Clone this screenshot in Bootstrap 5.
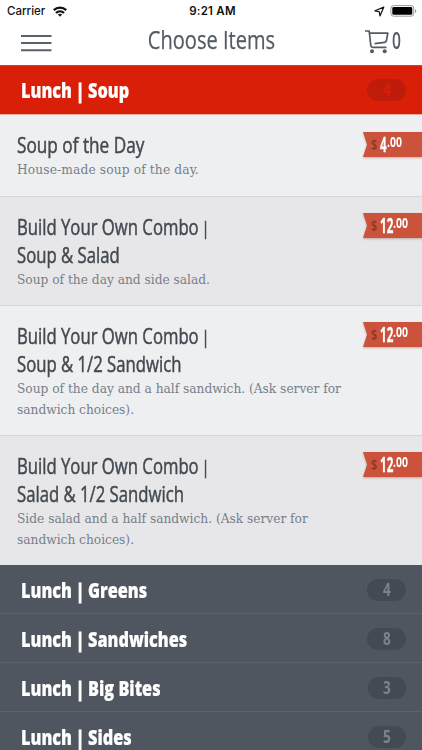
<!DOCTYPE html>
<html lang="en">
<head>
<meta charset="utf-8">
<meta name="viewport" content="width=device-width, initial-scale=1">
<title>Choose Items</title>
<link href="https://cdn.jsdelivr.net/npm/bootstrap@5.3.0/dist/css/bootstrap.min.css" rel="stylesheet">
<style>
html,body{height:750px;overflow:hidden}
body{font-family:"Open Sans","Noto Sans",sans-serif;background:#4f565f;color:#434950}
.fit{display:inline-block;white-space:nowrap;transform-origin:0 50%}
.status{height:22px;font:500 11.5px/22px Inter,sans-serif;color:#111;padding:0 4px 0 7px}
.status .clock{letter-spacing:.25px}
.topbar{height:43px}
.page-title{font-size:26px;line-height:34px;color:#535b66;font-weight:400;transform:scaleX(.772);transform-origin:50% 50%;white-space:nowrap;-webkit-text-stroke:.25px #535b66}
.count-cart{width:14px;font-size:23px;line-height:36px;font-weight:600;color:#535b66;transform:scaleX(.68);margin-left:1px}
.section-row{height:49px;padding:1px 16px 0 21px;background:#4f565f;border-bottom:1px solid #5b626b}
.section-row.open{height:50px;padding-top:0;background:#d91f07;border-top:1px solid #c4462f;border-bottom:1px solid #e9aaa2}
.section-name{font-weight:800;font-size:21px;line-height:28px;color:#fff;transform:scaleX(.775);-webkit-text-stroke:.2px #fff}
.section-name i{font-style:normal;font-size:.92em;line-height:0;-webkit-text-stroke:1px #fff}
.tally{width:39px;height:22px;background:#444a52;color:#7a838e;font-weight:700;font-size:17px}
.tally.slim{width:38px}
.tally span{transform:scaleX(.8)}
.section-row:not(.open) .tally{margin-top:1px}
.open .tally{background:#bf1c0b;color:#d91f07}
.dish{padding:16px 0 0 17px;background:#eeeff1;border-bottom:1px solid #d5d6d9}
.dish.alt{background:#e7e7e9}
.h0line{height:82px}.h2line{height:109px}.h3line{height:130px}
.h0line .ribbon{margin-top:1px}
.dish.last-dish{border-bottom:0;height:129px}
.dish-name{font-size:21.5px;line-height:28px;font-weight:400;transform:scaleX(.777);-webkit-text-stroke:.5px #434950;vertical-align:top}
.dish-name i{font-style:normal;font-size:.88em;line-height:0;margin-left:-2px}
.dish-name.short-name{transform:scaleX(.8)}
.dish-note{font:13.6px/21px "DejaVu Serif Condensed","DejaVu Serif",serif;font-stretch:condensed;color:#777e88;letter-spacing:-.015px}
.dish-note.airy{letter-spacing:.13px}
.ribbon{width:59px;height:25px;background:#cb523b;clip-path:polygon(0 0,100% 0,100% 100%,0 100%,4px 50%);color:#fff;padding-left:8px;line-height:25px}
.ribbon-wrap{filter:drop-shadow(0 1px 1px rgba(120,50,35,.35))}
.cur{font-size:14px;color:#8c3424;font-weight:600;width:9px;transform:scaleX(.8)}
.amt{font-size:21.5px;line-height:24px;font-weight:700;transform:scaleX(.54);width:13px;-webkit-text-stroke:.3px #fff}
.amt.one{width:7px}
.cents{font-size:14.5px;line-height:20px;font-weight:700;transform:scaleX(.72)}
</style>
<script src="https://cdn.jsdelivr.net/npm/bootstrap@5.3.0/dist/js/bootstrap.bundle.min.js"></script>
</head>
<body>
<header class="bg-white">
  <div class="status row g-0">
    <div class="col d-flex align-items-center"><span>Carrier</span>
      <svg class="ms-2" width="14" height="11" viewBox="0 0 14 11"><g fill="none" stroke="#111" stroke-width="2.300"><path d="M.8 4.100a8.900 8.900 0 0 1 12.400 0"/><path d="M3 7a5.800 5.800 0 0 1 8 0"/></g><path d="M7 10.800 4.900 8.600a3.200 3.200 0 0 1 4.200 0Z" fill="#111"/></svg>
    </div>
    <div class="col-auto fw-semibold clock">9:21 AM</div>
    <div class="col d-flex align-items-center justify-content-end">
      <svg width="11" height="11" viewBox="0 0 11 11"><path d="M9.800 1 1 4.900l4.200.7.800 4.300Z" fill="none" stroke="#111" stroke-width="1.200" stroke-linejoin="round"/></svg>
      <svg class="ms-1" width="29" height="12" viewBox="-1 0 29 12"><rect x=".9" y=".6" width="22.800" height="10.600" rx="2.600" fill="none" stroke="#999"/><rect x="2.300" y="2" width="20" height="7.800" rx="1.400" fill="#000"/><path d="M25 4v4q1.300-.6 1.300-2T25 4Z" fill="#999"/></svg>
    </div>
  </div>
  <div class="topbar row g-0">
    <div class="col ps-3"><svg class="ms-1 mt-2" width="32" height="26" viewBox="0 0 32 26"><path d="M1 5.900h30.500M1 13h30.500M1 20.300h30.500" stroke="#59616c" stroke-width="2"/></svg></div>
    <h1 class="page-title col-auto mb-0">Choose Items</h1>
    <div class="col d-flex justify-content-end pe-3">
      <svg class="mt-1" width="27" height="28" viewBox="0 0 27 28"><path d="M1 5h4.200l1.600 14.500q.2 1.800 2 1.800h13.700M5.800 7.200h18l-1.400 7.600q-.3 1.400-1.800 1.600l-10 1.200" fill="none" stroke="#535b66" stroke-width="1.700" stroke-linejoin="round"/><circle cx="8" cy="25.200" r="2" fill="#535b66"/><circle cx="20.700" cy="25.200" r="2" fill="#535b66"/></svg>
      <span class="fit count-cart">0</span>
    </div>
  </div>
</header>
<main>
  <div class="section-row open d-flex align-items-center justify-content-between"><span class="fit section-name">Lunch <i>|</i> Soup</span><span class="tally rounded-pill d-flex align-items-center justify-content-center"><span>4</span></span></div>
  <article class="dish h0line d-flex justify-content-between"><div><div class="fit dish-name short-name">Soup of the Day</div><div class="dish-note airy">House-made soup of the day.</div></div><div class="ribbon-wrap"><div class="ribbon d-flex"><span class="fit cur">$</span><span class="fit amt one">4</span><span class="fit cents">.00</span></div></div></article>
  <article class="dish alt h2line d-flex justify-content-between"><div><div class="fit dish-name">Build Your Own Combo <i>|</i><br>Soup &amp; Salad</div><div class="dish-note">Soup of the day and side salad.</div></div><div class="ribbon-wrap"><div class="ribbon d-flex"><span class="fit cur">$</span><span class="fit amt">12</span><span class="fit cents">.00</span></div></div></article>
  <article class="dish h3line d-flex justify-content-between"><div><div class="fit dish-name">Build Your Own Combo <i>|</i><br>Soup &amp; 1/2 Sandwich</div><div class="dish-note">Soup of the day and a half sandwich. (Ask server for<br>sandwich choices).</div></div><div class="ribbon-wrap"><div class="ribbon d-flex"><span class="fit cur">$</span><span class="fit amt">12</span><span class="fit cents">.00</span></div></div></article>
  <article class="dish alt last-dish d-flex justify-content-between"><div><div class="fit dish-name">Build Your Own Combo <i>|</i><br>Salad &amp; 1/2 Sandwich</div><div class="dish-note">Side salad and a half sandwich. (Ask server for<br>sandwich choices).</div></div><div class="ribbon-wrap"><div class="ribbon d-flex"><span class="fit cur">$</span><span class="fit amt">12</span><span class="fit cents">.00</span></div></div></article>
  <div class="section-row d-flex align-items-center justify-content-between"><span class="fit section-name">Lunch <i>|</i> Greens</span><span class="tally rounded-pill d-flex align-items-center justify-content-center"><span>4</span></span></div>
  <div class="section-row d-flex align-items-center justify-content-between"><span class="fit section-name">Lunch <i>|</i> Sandwiches</span><span class="tally rounded-pill d-flex align-items-center justify-content-center"><span>8</span></span></div>
  <div class="section-row d-flex align-items-center justify-content-between"><span class="fit section-name">Lunch <i>|</i> Big Bites</span><span class="tally slim rounded-pill d-flex align-items-center justify-content-center"><span>3</span></span></div>
  <div class="section-row d-flex align-items-center justify-content-between"><span class="fit section-name">Lunch <i>|</i> Sides</span><span class="tally slim rounded-pill d-flex align-items-center justify-content-center"><span>5</span></span></div>
</main>
</body>
</html>
